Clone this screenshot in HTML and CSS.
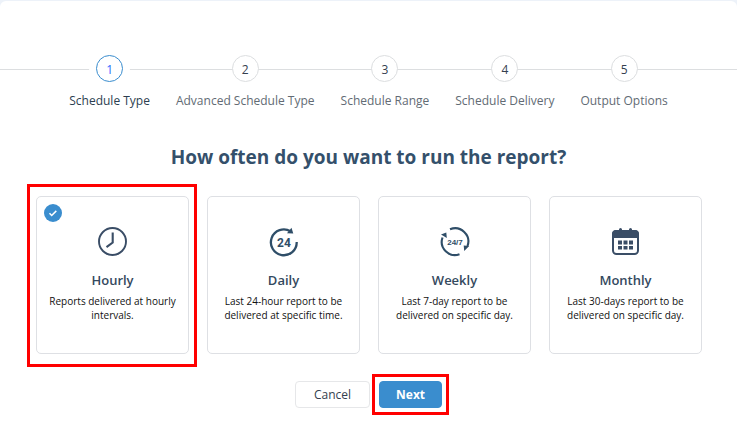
FILE: index.html
```html
<!DOCTYPE html>
<html lang="en">
<head>
  <meta charset="UTF-8">
  <meta name="viewport" content="width=device-width, initial-scale=1.0">
  <title>Schedule Report</title>
  <link rel="stylesheet" href="styles.css">
</head>
<body>

  <form class="wizard">
    <ol class="steps">
      <li class="step active"><span class="step-number">1</span>Schedule Type</li>
      <li class="step"><span class="step-number">2</span>Advanced Schedule Type</li>
      <li class="step"><span class="step-number">3</span>Schedule Range</li>
      <li class="step"><span class="step-number">4</span>Schedule Delivery</li>
      <li class="step"><span class="step-number">5</span>Output Options</li>
    </ol>

    <h1>How often do you want to run the report?</h1>

    <div class="cards">
      <label class="card highlight">
        <input type="radio" name="frequency" value="hourly" checked>
        <svg class="card-check" viewBox="0 0 18 18"><path d="M5.5 9.3l2.2 2.2 4.6-4.6"/></svg>
        <svg class="card-icon" viewBox="0 0 30 30">
          <circle cx="14.5" cy="14.5" r="13.5" fill="none" stroke="#3a4d66" stroke-width="1.9"/>
          <path d="M14.7 5.500v10l-6.200 4.700" fill="none" stroke="#3a4d66" stroke-width="2.100"/>
        </svg>
        <span class="card-title">Hourly</span>
        <span class="card-text">Reports delivered at hourly intervals.</span>
      </label>

      <label class="card">
        <input type="radio" name="frequency" value="daily">
        <svg class="card-icon" viewBox="0 0 30 30">
          <path d="M27.700 15A12.900 12.900 0 1 1 21.500 4.300" fill="none" stroke="#2f4e68" stroke-width="2.300"/>
          <path d="M22.500 .8l1.800 5.700-6.300-.3z" fill="#2f4e68"/>
          <text class="icon-text" x="15" y="19.500">24</text>
        </svg>
        <span class="card-title">Daily</span>
        <span class="card-text">Last 24-hour report to be delivered at specific time.</span>
      </label>

      <label class="card">
        <input type="radio" name="frequency" value="weekly">
        <svg class="card-icon" viewBox="0 0 30 30">
          <path d="M10 2.300A13.200 13.200 0 0 1 27.500 19M19.500 27.200A13.200 13.200 0 0 1 2.500 10.500" fill="none" stroke="#2f4e68" stroke-width="2.100"/>
          <path d="M1 7.500l5.300-2 .5 5.500zM29.200 19l-5 5-.5-5.500z" fill="#2f4e68"/>
          <text class="icon-text small" x="15" y="17.500">24/7</text>
        </svg>
        <span class="card-title">Weekly</span>
        <span class="card-text">Last 7-day report to be delivered on specific day.</span>
      </label>

      <label class="card">
        <input type="radio" name="frequency" value="monthly">
        <svg class="card-icon" viewBox="0 0 30 30">
          <rect x="2" y="4" width="25" height="23" rx="3.500" fill="none" stroke="#3a4d66" stroke-width="2"/>
          <path d="M1 11V7a4 4 0 0 1 4-4h19a4 4 0 0 1 4 4v4z" fill="#3a4d66"/>
          <path d="M9.500 2.500v2M19.500 2.500v2" stroke="#3a4d66" stroke-width="3" stroke-linecap="round"/>
          <path d="M7 13.500h4v4h-4zM12.500 13.500h4v4h-4zM18 13.500h4v4h-4zM7 19h4v3.500h-4zM12.500 19h4v3.500h-4zM18 19h4v3.500h-4z" fill="#3a4d66"/>
        </svg>
        <span class="card-title">Monthly</span>
        <span class="card-text">Last 30-days report to be delivered on specific day.</span>
      </label>
    </div>

    <div class="actions">
      <button type="button" class="btn">Cancel</button>
      <button type="submit" class="btn btn-primary highlight">Next</button>
    </div>
  </form>

</body>
</html>
```

FILE: styles.css
```css
* {
  box-sizing: border-box;
}
body {
  margin: 0;
  background: #edf2f9;
  font-family: "Open Sans", "Noto Sans", sans-serif;
  font-size: 12px;
  color: #34495e;
}
.wizard {
  margin-top: 1px;
  padding-top: 54px;
  min-height: calc(100vh - 1px);
  background: #fff;
  border-radius: 6px 6px 0 0;
}

/* steps */
.steps {
  display: flex;
  justify-content: center;
  gap: 26px;
  margin: 0;
  padding: 0;
  list-style: none;
  background: linear-gradient(#dcdee0, #dcdee0) 0 14px / 100% 1px no-repeat;
}
.step {
  display: flex;
  flex-direction: column;
  align-items: center;
  gap: 10px;
  line-height: 18px;
  color: #626b74;
  white-space: nowrap;
}
.step-number {
  width: 27px;
  height: 27px;
  border: 1px solid #dcdee0;
  border-radius: 50%;
  background: #fff;
  line-height: 27px;
  text-align: center;
  color: #34404f;
}
.step.active {
  color: #2c3e50;
}
.active .step-number {
  border-color: #3a8dce;
  box-shadow: 0 0 0 7px #fff;
  color: #2f6bff;
}

h1 {
  margin: 33px 0 25px;
  font-size: 19px;
  line-height: 28px;
  font-weight: 700;
  text-align: center;
  color: #34506b;
}

/* cards */
.cards {
  display: grid;
  grid-template-columns: repeat(4, 1fr);
  gap: 18px;
  padding: 0 35px 0 36px;
}
.card {
  position: relative;
  display: flex;
  flex-direction: column;
  align-items: center;
  min-height: 158px;
  padding: 30px 12px 12px;
  border: 1px solid #dee0e4;
  border-radius: 5px;
  text-align: center;
  cursor: pointer;
}
.card input {
  position: absolute;
  top: 7px;
  left: 7px;
  width: 18px;
  height: 18px;
  margin: 0;
  border-radius: 50%;
  appearance: none;
}
.card input:checked {
  background: #3a8dce;
}
.card-check {
  position: absolute;
  top: 7px;
  left: 7px;
  width: 18px;
  height: 18px;
  fill: none;
  stroke: #fff;
  stroke-width: 1.5;
}
.card-icon {
  width: 30px;
  height: 30px;
}
.icon-text {
  font-family: Roboto, sans-serif;
  font-size: 12px;
  font-weight: 700;
  text-anchor: middle;
  fill: #2f4e68;
}
.icon-text.small {
  font-family: "Liberation Sans", sans-serif;
  font-size: 8px;
}
.card-title {
  margin-top: 13px;
  font-size: 13px;
  line-height: 20px;
  font-weight: 600;
}
.card-text {
  margin-top: 4px;
  font-size: 10px;
  line-height: 14px;
  color: #111;
}

/* buttons */
.actions {
  display: flex;
  justify-content: center;
  gap: 9px;
  margin-top: 27px;
}
.btn {
  position: relative;
  height: 27px;
  padding: 0 18px;
  border: 1px solid #e6e7e9;
  border-radius: 4px;
  background: #fff;
  font-family: inherit;
  font-size: 12px;
  color: #34404f;
  cursor: pointer;
}
.btn-primary {
  padding: 0 16px;
  border-color: #3a8dce;
  background: #3a8dce;
  font-weight: 700;
  color: #fff;
}

.highlight::after {
  content: "";
  position: absolute;
  inset: -13px -9px -14px -10px;
  border: 3px solid #f00;
  pointer-events: none;
}
.btn.highlight::after {
  inset: -8px;
}
```
